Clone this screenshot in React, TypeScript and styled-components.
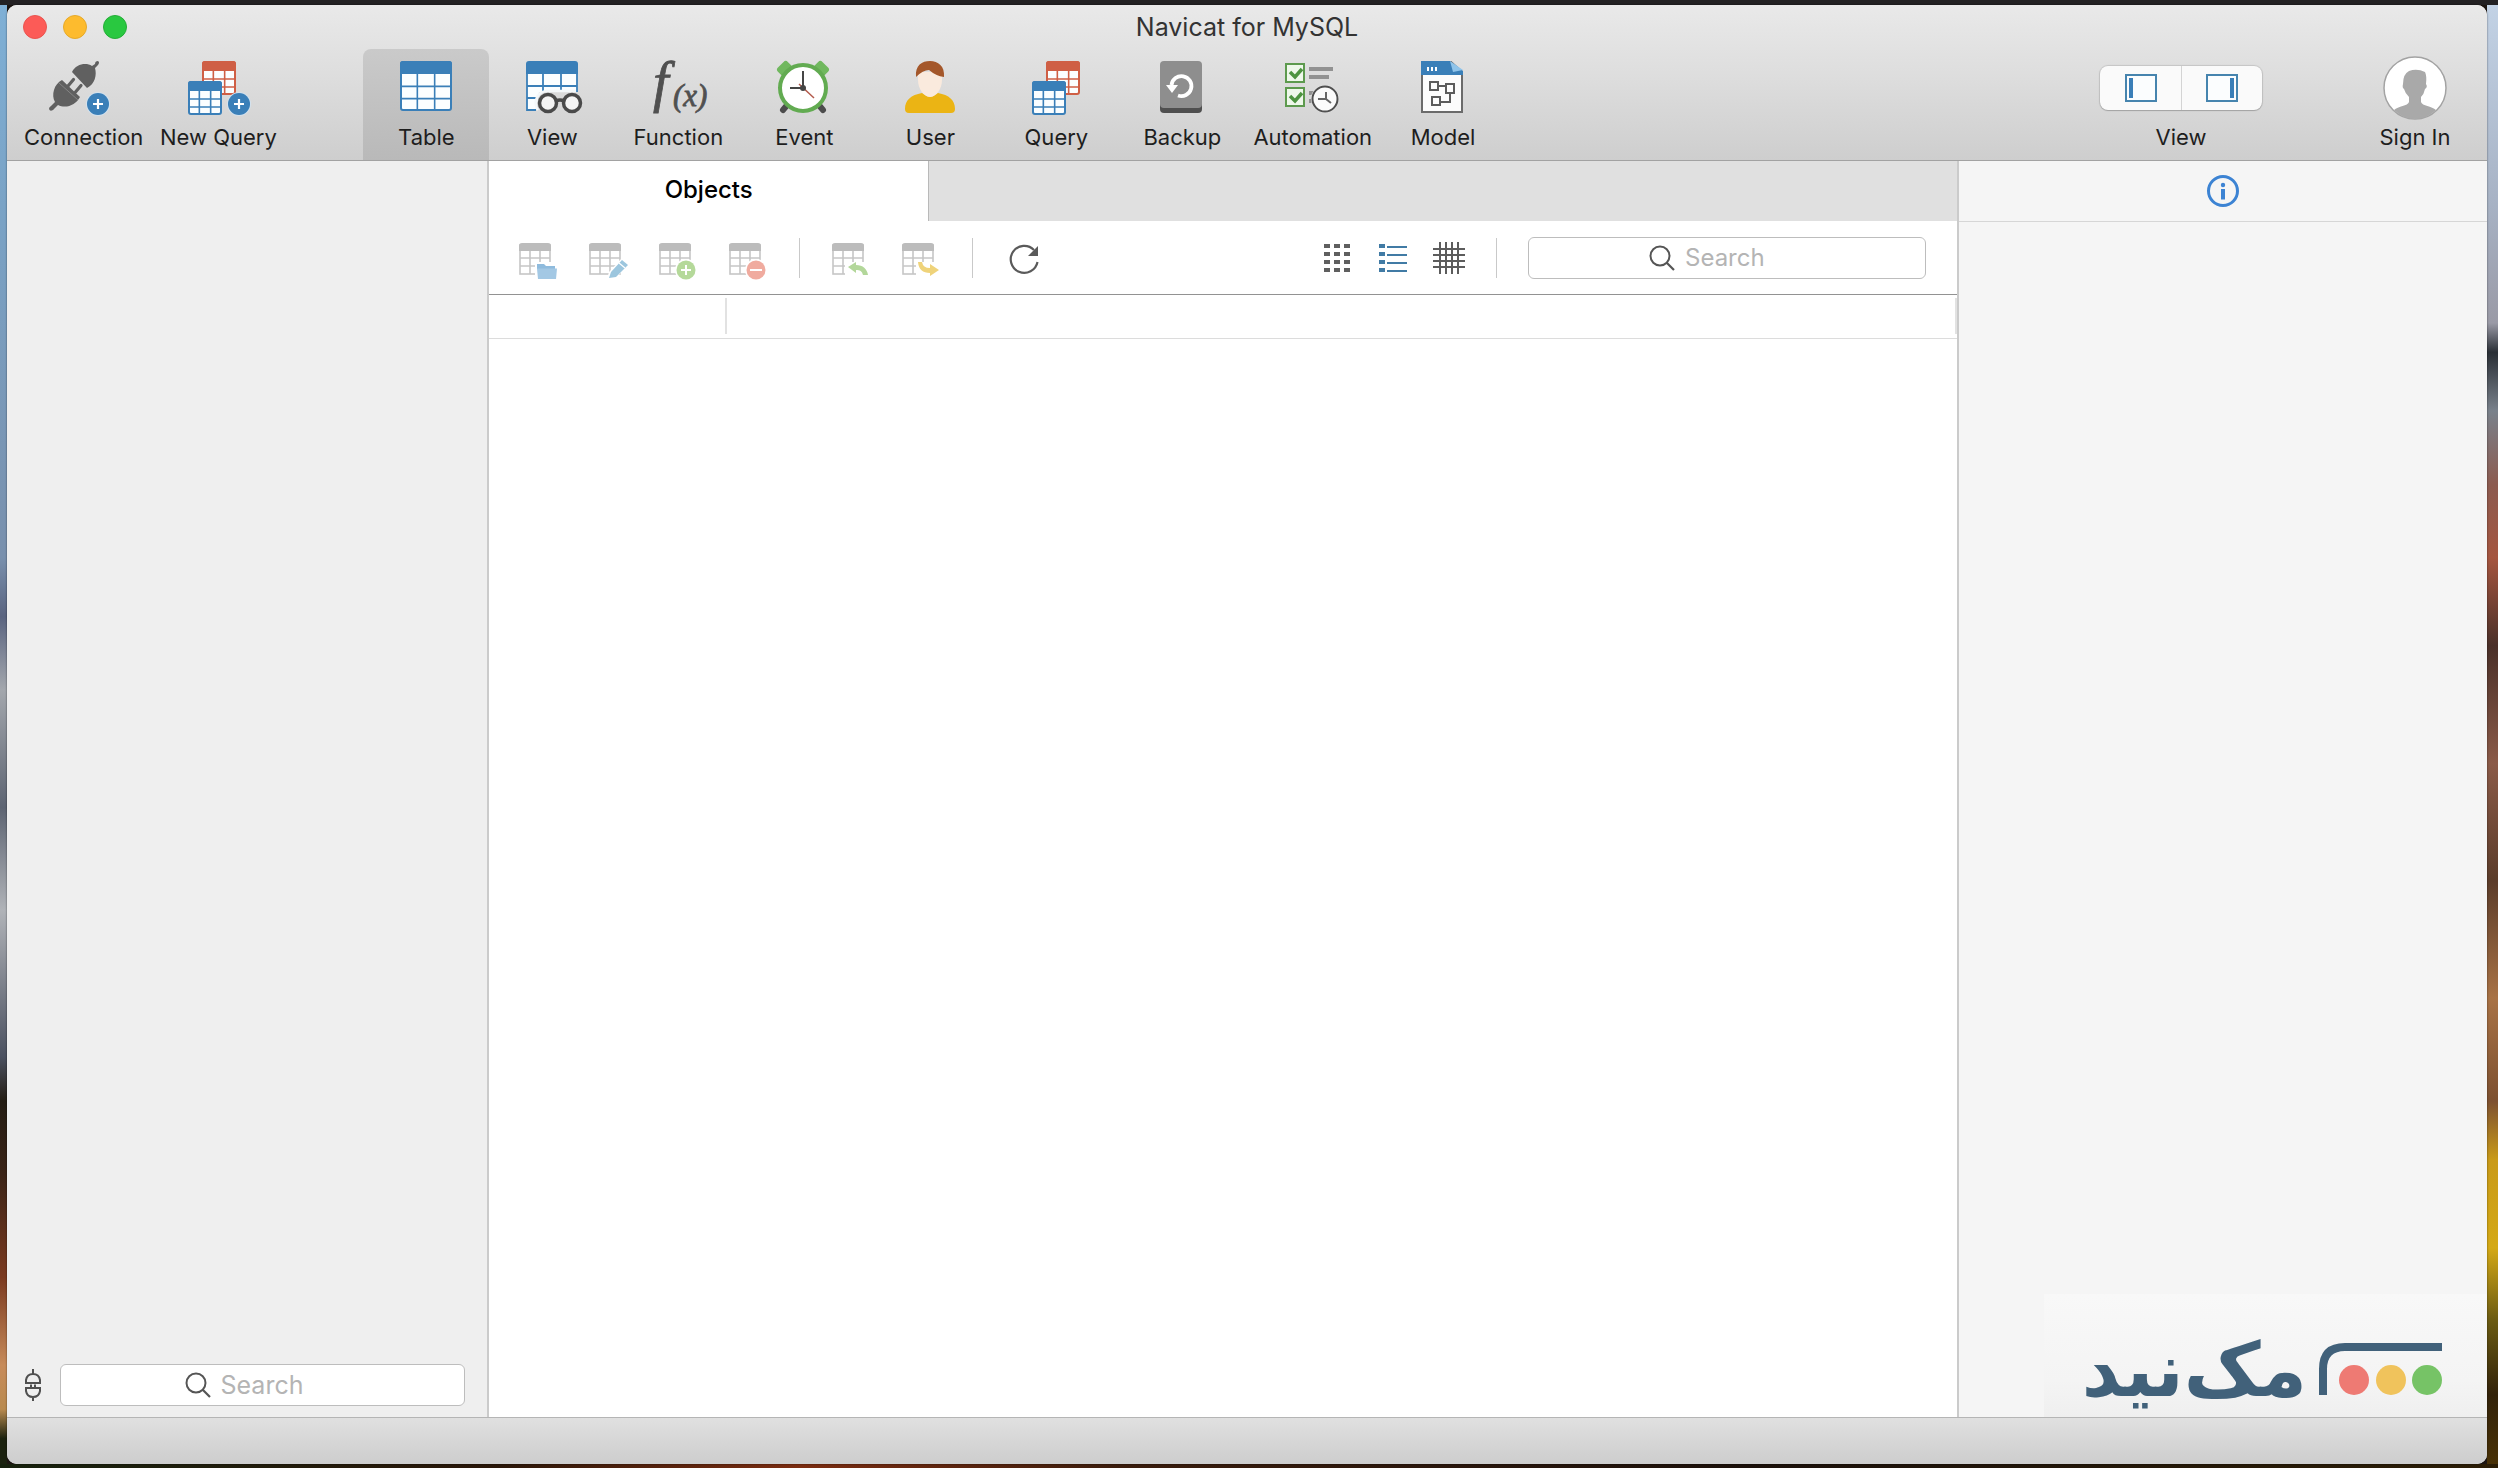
import React from "react";
import styled, { createGlobalStyle, css } from "styled-components";

const BLUE = "#3a7fb8";
const RED = "#cf5f45";
const INK = "#1e1e1e";
const GREY = "#555555";

const GlobalStyle = createGlobalStyle`
  *, *::before, *::after { box-sizing: border-box; }
  body {
    margin: 0;
    font-family: Inter, Roboto, "Liberation Sans", sans-serif;
    color: ${INK};
  }
  button, input { font: inherit; color: inherit; }
  svg { display: block; overflow: visible; }
`;

const Desktop = styled.div`
  display: flex;
  height: 100vh;
  padding: 5px 11px 4px 7px;
  background:
    linear-gradient(#232123, #232123) top / 100% 5px no-repeat,
    linear-gradient(90deg, #16210d, #2a1608 20%, #7c2c10 32%, #3a1c0c 45%, #1b100a 70%, #2b1d05) bottom / 100% 4px no-repeat,
    linear-gradient(#7fb0d6, #7aa3c6 14%, #7990ad 38%, #5a6480 42%, #a3a7ad 47%, #5d6472 55%, #b0b3b8 62%, #4b5160 72%, #241d14 75%, #3b2417 80%, #7b3a20 87%, #c78b5a 93%, #b98a4e 96%, #1b220f 98%) left / 7px 100% no-repeat,
    linear-gradient(#c3d3e6, #a7b2c4 14%, #9a9aa6 22%, #2a2f36 24%, #79818b 28%, #8c5b50 33%, #a5553f 38%, #4a3029 44%, #8a5a48 52%, #5b3c2a 60%, #a87245 68%, #7d5030 75%, #c99a18 79%, #d4a915 85%, #6a5a12 90%, #32220a 95%, #4a3206) right / 11px 100% no-repeat,
    #1d1612;
`;

const Window = styled.div`
  display: flex;
  flex: 1;
  flex-direction: column;
  min-width: 0;
  overflow: hidden;
  border-radius: 10px;
  background: #f5f5f5;
  box-shadow: 0 0 2px rgba(0, 0, 0, 0.6);
`;

const Header = styled.header`
  border-bottom: 1px solid #a2a2a2;
  background: linear-gradient(#e9e9e9, #dfdfdf 40%, #cecece);
`;

const TitleBar = styled.div`
  display: grid;
  grid-template-columns: 1fr auto 1fr;
  align-items: center;
  height: 44px;
  padding: 0 16px;
`;

const Lights = styled.div`
  display: flex;
  gap: 16px;
`;

const Light = styled.button<{ $color: string; $edge: string }>`
  width: 24px;
  height: 24px;
  padding: 0;
  border: 1px solid ${(p) => p.$edge};
  border-radius: 50%;
  background: ${(p) => p.$color};
`;

const Title = styled.h1`
  margin: 0;
  font-size: 25px;
  font-weight: 400;
  line-height: 30px;
  color: #333333;
`;

const Toolbar = styled.div`
  display: flex;
  height: 111px;
  padding: 0 9px;
`;

const ToolGroup = styled.div`
  display: flex;
  margin-right: 78px;
`;

const TrailingTools = styled.div`
  display: flex;
  gap: 90px;
  margin-left: auto;
`;

const toolColumn = css`
  display: flex;
  flex-direction: column;
  align-items: center;
  gap: 6px;
  padding: 9px 8px 10px;
  font-size: 22px;
  line-height: 26px;
  white-space: nowrap;
`;

const Tool = styled.button<{ $active?: boolean; $min?: number }>`
  ${toolColumn}
  min-width: ${(p) => p.$min ?? 126}px;
  border: 0;
  border-radius: 8px 8px 0 0;
  background: ${(p) => (p.$active ? "linear-gradient(#cacaca, #b9b9b9)" : "none")};
`;

const ToolField = styled.div`
  ${toolColumn}
  padding-left: 0;
  padding-right: 0;
`;

const IconSlot = styled.span`
  display: flex;
  align-items: center;
  justify-content: center;
  height: 60px;
`;

const Segments = styled.div`
  display: flex;
  height: 44px;
  border-radius: 8px;
  background: #fafafa;
  box-shadow: 0 0 1px 1px rgba(0, 0, 0, 0.12), 0 1px 1px rgba(0, 0, 0, 0.15);
`;

const Segment = styled.button`
  display: flex;
  align-items: center;
  justify-content: center;
  width: 81px;
  padding: 0;
  border: 0;
  background: none;
  & + & {
    border-left: 1px solid #d4d4d4;
  }
`;

const Body = styled.div`
  display: flex;
  flex: 1;
  min-height: 0;
`;

const Sidebar = styled.aside`
  display: flex;
  flex: 0 0 482px;
  flex-direction: column;
  justify-content: flex-end;
  border-right: 2px solid #cbcbcb;
  background: #efefef;
`;

const SidebarFooter = styled.div`
  display: flex;
  align-items: center;
  gap: 20px;
  padding: 0 22px 11px 19px;
`;

const PlainButton = styled.button`
  display: flex;
  padding: 0;
  border: 0;
  background: none;
`;

const SearchField = styled.label<{ $width?: number }>`
  display: flex;
  ${(p) => (p.$width ? `width: ${p.$width}px;` : "flex: 1;")}
  align-items: center;
  justify-content: center;
  gap: 10px;
  height: 42px;
  border: 1px solid #bdbdbd;
  border-radius: 6px;
  background: #ffffff;
`;

const SearchInput = styled.input<{ $size: number }>`
  width: 120px;
  padding: 0;
  border: 0;
  outline: 0;
  background: none;
  font-size: ${(p) => p.$size}px;
  line-height: 30px;
  &::placeholder {
    color: #b4b4b4;
    opacity: 1;
  }
`;

const Main = styled.main`
  display: flex;
  flex: 1;
  flex-direction: column;
  min-width: 0;
  background: #ffffff;
`;

const TabBar = styled.div`
  display: flex;
  height: 60px;
  background: #e0e0e0;
`;

const Tab = styled.button`
  width: 30%;
  padding: 0 0 2px;
  border: 0;
  border-right: 1px solid #b9b9b9;
  background: #ffffff;
  font-size: 24px;
  font-weight: 500;
  line-height: 30px;
  color: #000000;
`;

const ObjectBar = styled.div`
  display: flex;
  align-items: center;
  justify-content: space-between;
  height: 74px;
  padding: 0 31px 0 29px;
  border-bottom: 1px solid #929292;
`;

const ObjectGroup = styled.div`
  display: flex;
  align-items: center;
  gap: 30px;
`;

const Divider = styled.span`
  width: 1px;
  height: 40px;
  margin: 0 1px;
  background: #c9c9c9;
`;

const ViewSwitch = styled.div`
  display: flex;
  gap: 24px;
`;

const ListTable = styled.table`
  width: 100%;
  border-collapse: collapse;
  border-bottom: 1px solid #dcdcdc;
`;

const ColumnHead = styled.th<{ $width?: string }>`
  width: ${(p) => p.$width ?? "auto"};
  height: 43px;
  padding: 3px 0 4px;
`;

const ColumnEdge = styled.span`
  display: block;
  height: 36px;
  border-right: 2px solid #e2e2e2;
`;

const InfoPane = styled.aside`
  display: flex;
  flex: 0 0 530px;
  flex-direction: column;
  border-left: 2px solid #cbcbcb;
  background: #f5f5f5;
`;

const InfoTabs = styled.div`
  display: flex;
  justify-content: center;
  align-items: center;
  height: 61px;
  border-bottom: 1px solid #d6d6d6;
`;

const Watermark = styled.div`
  display: flex;
  align-items: flex-start;
  align-self: flex-end;
  gap: 12px;
  height: 123px;
  margin-top: auto;
  padding: 49px 45px 0 38px;
  background: linear-gradient(#f8f8f8, #f4f4f4 70%, #efefef);
  color: #41617a;
`;

const Wordmark = styled.span`
  font-family: "DejaVu Sans", sans-serif;
  font-size: 75px;
  font-weight: 700;
  line-height: 54px;
  white-space: nowrap;
`;

const StatusBar = styled.footer`
  height: 47px;
  border-top: 1px solid #b5b5b5;
  background: linear-gradient(#e0e0e0, #cdcdcd);
`;

/* ---------- drawings ---------- */

function Art({ w = 72, h = 60, children }: { w?: number; h?: number; children: React.ReactNode }) {
  return (
    <svg width={w} height={h} viewBox={`0 0 ${w} ${h}`} fill="none" aria-hidden="true">
      {children}
    </svg>
  );
}

type SheetProps = { x: number; y: number; w: number; h: number; head: number; color: string };

function Sheet({ x, y, w, h, head, color }: SheetProps) {
  const row = (h - head) / 3;
  return (
    <g>
      <rect x={x + 1} y={y + 1} width={w - 2} height={h - 2} rx="2" fill="#fbfeff" stroke={color} strokeWidth="2" />
      <path d={`M${x} ${y + head}V${y + 3}q0 -3 3 -3H${x + w - 3}q3 0 3 3V${y + head}Z`} fill={color} />
      <path
        d={`M${x + w / 3} ${y + head}V${y + h}M${x + (2 * w) / 3} ${y + head}V${y + h}M${x} ${y + head + row}H${x + w}M${x} ${y + head + 2 * row}H${x + w}`}
        stroke={color}
        strokeWidth="1.6"
      />
    </g>
  );
}

function PlusBadge({ x, y }: { x: number; y: number }) {
  return (
    <g>
      <circle cx={x} cy={y} r="12" fill="#d3e2ee" />
      <circle cx={x} cy={y} r="11" fill={BLUE} />
      <path d={`M${x - 5} ${y}h10M${x} ${y - 5}v10`} stroke="#fff" strokeWidth="2.2" />
    </g>
  );
}

const ConnectionIcon = () => (
  <Art>
    <path d="M24 14C28 6 38 4 44 8L47 6Q47 3 50 3Q52 4 50 7L47 10C49 17 47 26 39 30Z" fill="#606060" />
    <path d="M20 28l5.500-6.500M27.500 34l5.500-6.500" stroke="#606060" strokeWidth="3.200" strokeLinecap="round" />
    <path d="M14 22L32 39C28 47 18 51 10 47L5 52Q2 54 1 51Q1 49 3 48L7 44C3 37 6 26 14 22Z" fill="#606060" />
    <path d="M11 25L30 42" stroke="#848484" strokeWidth="1" />
    <PlusBadge x={50} y={46} />
  </Art>
);

const NewQueryIcon = () => (
  <Art>
    <Sheet x={20} y={3} w={34} h={34} head={10} color={RED} />
    <Sheet x={6} y={23} w={34} h={34} head={10} color={BLUE} />
    <PlusBadge x={57} y={46} />
  </Art>
);

const TableIcon = () => (
  <Art>
    <Sheet x={10} y={3} w={52} h={50} head={13} color={BLUE} />
  </Art>
);

const ViewIcon = () => (
  <Art>
    <path d="M11 15V52H20L23 34H61V15Z" fill="#fbfeff" />
    <path d="M10 16V6q0-3 3-3H59q3 0 3 3V16Z" fill={BLUE} />
    <path d="M11 16V52H20M61 16V34M27 16V34M45 16V34M11 28H61M11 40H20" stroke={BLUE} strokeWidth="1.800" />
    <path d="M22 52A12 12 0 0 1 30 33H60" stroke="#f4f8fa" strokeWidth="2.500" />
    <circle cx="32" cy="45" r="8.500" fill="#f4f4f4" stroke="#4a4a4a" strokeWidth="3.500" />
    <circle cx="56" cy="45" r="8.500" fill="#f4f4f4" stroke="#4a4a4a" strokeWidth="3.500" />
    <path d="M40 43q4-2 8 0" stroke="#4a4a4a" strokeWidth="3.500" />
  </Art>
);

const FunctionIcon = () => (
  <Art>
    <g fill="#505050" stroke="#505050" strokeWidth="0.800" fontFamily="'Liberation Serif', serif" fontStyle="italic">
      <text x="16" y="43" fontSize="56" textAnchor="start" dx="-5">f</text>
      <text x="31" y="48" fontSize="31">(x)</text>
    </g>
  </Art>
);

const EventIcon = () => (
  <Art>
    <path d="M20 46L15 52M50 46L55 52" stroke="#4c4c4c" strokeWidth="6" strokeLinecap="round" />
    <rect x="10" y="5" width="14" height="11" rx="3" transform="rotate(-45 17 11)" fill="#70b85e" />
    <rect x="46" y="5" width="14" height="11" rx="3" transform="rotate(45 53 11)" fill="#70b85e" />
    <circle cx="35" cy="30" r="23" fill="#fff" stroke="#62ab51" strokeWidth="4" />
    <path d="M35 30V13M35 30H22" stroke="#454545" strokeWidth="2" />
    <path d="M31 26L46 40" stroke="#b35a4c" strokeWidth="1.500" />
    <circle cx="35" cy="30" r="3" fill="#454545" />
  </Art>
);

const UserIcon = () => (
  <Art>
    <path d="M11 51C11 42 17 37 28 35Q36 42 44 35C55 37 61 42 61 51Q61 55 57 55H15Q11 55 11 51Z" fill="#ebb414" />
    <path d="M24 14H48V22C48 31 42 39 36 39S24 31 24 22Z" fill="#faeadd" />
    <path d="M22 19C21 7 28 3 36 3S51 8 50 19Q42 18 35 12Q29 12 22 19Z" fill="#a4572a" />
  </Art>
);

const QueryIcon = () => (
  <Art>
    <Sheet x={26} y={3} w={34} h={34} head={10} color={RED} />
    <Sheet x={12} y={23} w={34} h={34} head={10} color={BLUE} />
  </Art>
);

const BackupIcon = () => (
  <Art>
    <rect x="14" y="15" width="42" height="40" rx="4" fill="#4f4f4f" />
    <rect x="14" y="3" width="42" height="47" rx="4" fill="#8e8e8e" />
    <path d="M25.500 27A10 10 0 1 1 32 37.500" stroke="#fff" strokeWidth="3.800" />
    <path d="M20 27H32L26 35Z" fill="#fff" />
  </Art>
);

const AutomationIcon = () => (
  <Art>
    {[6, 30].map((y) => (
      <g key={y}>
        <rect x="9" y={y} width="18" height="18" fill="#eef8ea" stroke="#5d9a4e" strokeWidth="2" />
        <path d={`M13 ${y + 8}l5 5l7-8`} stroke="#4d9440" strokeWidth="3.500" />
      </g>
    ))}
    <path d="M32 11H56M32 19H52M32 35H38M32 43H36" stroke="#929292" strokeWidth="4" />
    <circle cx="48" cy="41" r="14" fill="#e4e4e4" />
    <circle cx="48" cy="41" r="12.500" fill="#fbfbfb" stroke="#505050" strokeWidth="2" />
    <path d="M49 34V41L54 45M49 41H41" stroke="#666" strokeWidth="2" />
  </Art>
);

const ModelIcon = () => (
  <Art>
    <path d="M15 4H44L55 14V54H15Z" fill="#fcfcfc" stroke="#6b6b6b" strokeWidth="2" />
    <path d="M14 3H43L56 13V17H14Z" fill={BLUE} />
    <path d="M43 3L56 12L46 14Z" fill="#8fc4ea" />
    <path d="M21 9V13M25 9V13M29 9V13" stroke="#fff" strokeWidth="2" />
    <path d="M23 24h8v8h-8zM39 26h8v9h-8zM25 39h8v8h-8zM31 28H39M33 44H43V35" stroke="#5c5c5c" strokeWidth="2" />
  </Art>
);

const PaneIcon = ({ side }: { side: "left" | "right" }) => (
  <Art w={32} h={28}>
    <rect x="1" y="1" width="30" height="26" fill="#fbfdfe" stroke="#4684ae" strokeWidth="2" />
    <rect x={side === "left" ? 4 : 24} y="4" width="4" height="20" fill={BLUE} />
  </Art>
);

const AvatarIcon = () => (
  <Art w={64} h={64}>
    <circle cx="32" cy="32" r="31" fill="#fff" stroke="#a3a3a3" strokeWidth="1.500" />
    <path
      d="M11 54C15 50 25 50 26 46V41Q22 37 21 33Q19 32 20 28Q20 18 26 15Q34 12 42 16Q44 20 43 28Q45 31 42 33Q41 38 38 41V46C39 50 49 50 53 54Q44 63 32 63T11 54Z"
      fill="#a9a9a9"
    />
  </Art>
);

const InfoIcon = () => (
  <Art w={32} h={32}>
    <circle cx="16" cy="16" r="14.500" stroke="#3c83d3" strokeWidth="3" />
    <circle cx="16" cy="10" r="2.200" fill="#3c83d3" />
    <path d="M16 14V24.500" stroke="#3c83d3" strokeWidth="4" />
  </Art>
);

const SearchIcon = () => (
  <Art w={26} h={26}>
    <circle cx="11" cy="11" r="9.500" stroke={GREY} strokeWidth="2" />
    <path d="M17.500 17.500L25 25" stroke={GREY} strokeWidth="2.200" />
  </Art>
);

const PlugIcon = () => (
  <Art w={14} h={32}>
    <path d="M7 0V5M0 14V11Q1 5 7 5T14 11V14ZM0 19V22Q1 28 7 28T14 22V19ZM7 28V32M5 15.500V18M9 15.500V18" stroke="#505050" strokeWidth="2" />
  </Art>
);

function ObjectIcon({ children }: { children: React.ReactNode }) {
  return (
    <Art w={40} h={40}>
      <rect x="2" y="7" width="30" height="29" fill="#fff" stroke="#c6c6c6" strokeWidth="1.600" />
      <path d="M1 13V8Q1 5 4 5H30Q33 5 33 8V13Z" fill="#bcbcbc" />
      <path d="M12 13V36M22 13V36M2 20H32M2 28H32" stroke="#c6c6c6" strokeWidth="1.600" />
      {children}
    </Art>
  );
}

const objectTools = [
  {
    label: "Open Table",
    art: (
      <>
        <path d="M17 24H40V42H17Z" fill="#fff" />
        <path d="M19 26H26L28 28H37V31H19Z" fill="#8fbbdd" />
        <path d="M19 30.500H39L38 41H20Z" fill="#a3c8e4" />
      </>
    ),
  },
  {
    label: "Design Table",
    art: (
      <>
        <path d="M19 41L21 34L34 20L41 26L29 39Z" fill="#fff" />
        <path d="M21 40L23 34L34 22L40 27L28 39Z" fill="#9cc6de" />
        <path d="M31 25L37 30" stroke="#fff" strokeWidth="1.200" />
      </>
    ),
  },
  {
    label: "New Table",
    art: (
      <>
        <circle cx="28" cy="32" r="11" fill="#fff" />
        <circle cx="28" cy="32" r="9.500" fill="#b5d99a" />
        <path d="M23 32H33M28 27V37" stroke="#fff" strokeWidth="2" />
      </>
    ),
  },
  {
    label: "Delete Table",
    art: (
      <>
        <circle cx="28" cy="32" r="11" fill="#fff" />
        <circle cx="28" cy="32" r="9.500" fill="#f0ab9f" />
        <path d="M22 32H34" stroke="#fff" strokeWidth="2" />
      </>
    ),
  },
];

const transferTools = [
  {
    label: "Import Wizard",
    art: (
      <>
        <path d="M14 24H40V42H14Z" fill="#fff" />
        <path d="M17 29L25 24V27C32 27 36 31 37 37H32C31 33 29 32 25 32V35Z" fill="#b3d79a" />
      </>
    ),
  },
  {
    label: "Export Wizard",
    art: (
      <>
        <path d="M15 24H40V42H15Z" fill="#fff" />
        <path d="M17 24H21Q22 30 29 30V26L38 32L29 38V35Q18 35 17 24Z" fill="#efd37a" />
      </>
    ),
  },
];

const RefreshIcon = () => (
  <Art w={40} h={40}>
    <path d="M30 12A13.500 13.500 0 1 0 33.500 24" stroke="#5a5a5a" strokeWidth="2.200" />
    <path d="M34 8V18H24Z" fill="#5a5a5a" />
  </Art>
);

const GridIcon = () => (
  <Art w={32} h={32}>
    {[2, 10, 18, 26].map((y) =>
      [3, 13, 23].map((x) => <rect key={`${x}-${y}`} x={x} y={y} width="6" height="4" fill="#5f5f5f" />)
    )}
  </Art>
);

const DetailIcon = () => (
  <Art w={32} h={32}>
    {[2, 10, 18, 26].map((y) => (
      <g key={y} fill="#417ba5">
        <rect x="2" y={y} width="6" height="4" />
        <rect x="10" y={y + 2} width="20" height="2" />
      </g>
    ))}
  </Art>
);

const HatchIcon = () => (
  <Art w={32} h={32}>
    <path d="M7 0V32M13 0V32M19 0V32M25 0V32M0 7H32M0 13H32M0 19H32M0 25H32" stroke="#5c5c5c" strokeWidth="2" />
  </Art>
);

const BrandMark = () => (
  <Art w={123} h={52}>
    <path d="M4 52V26Q4 4 26 4H123" stroke="#41617a" strokeWidth="8" />
    <circle cx="35" cy="37" r="15" fill="#ee7a73" />
    <circle cx="72" cy="37" r="15" fill="#f0c35c" />
    <circle cx="108" cy="37" r="15" fill="#76c366" />
  </Art>
);

/* ---------- page ---------- */

const lights = [
  { label: "Close", color: "#fc5b57", edge: "#e9544f" },
  { label: "Minimize", color: "#fdbb2e", edge: "#e5a92a" },
  { label: "Zoom", color: "#29c840", edge: "#24ad37" },
];

const createTools = [
  { label: "Connection", icon: <ConnectionIcon /> },
  { label: "New Query", icon: <NewQueryIcon /> },
];

const objectTypes = [
  { label: "Table", icon: <TableIcon />, active: true },
  { label: "View", icon: <ViewIcon /> },
  { label: "Function", icon: <FunctionIcon /> },
  { label: "Event", icon: <EventIcon /> },
  { label: "User", icon: <UserIcon /> },
  { label: "Query", icon: <QueryIcon /> },
  { label: "Backup", icon: <BackupIcon /> },
  { label: "Automation", icon: <AutomationIcon /> },
  { label: "Model", icon: <ModelIcon /> },
];

function Search({ label, size, width }: { label: string; size: number; width?: number }) {
  return (
    <SearchField $width={width}>
      <SearchIcon />
      <SearchInput type="text" placeholder="Search" aria-label={label} $size={size} />
    </SearchField>
  );
}

export default function App() {
  return (
    <Desktop>
      <GlobalStyle />
      <Window>
        <Header>
          <TitleBar>
            <Lights>
              {lights.map((l) => (
                <Light key={l.label} aria-label={l.label} $color={l.color} $edge={l.edge} />
              ))}
            </Lights>
            <Title>Navicat for MySQL</Title>
          </TitleBar>
          <Toolbar>
            <ToolGroup>
              {createTools.map((t) => (
                <Tool key={t.label} $min={134}>
                  <IconSlot>{t.icon}</IconSlot>
                  {t.label}
                </Tool>
              ))}
            </ToolGroup>
            <ToolGroup>
              {objectTypes.map((t) => (
                <Tool key={t.label} $active={t.active} aria-pressed={!!t.active}>
                  <IconSlot>{t.icon}</IconSlot>
                  {t.label}
                </Tool>
              ))}
            </ToolGroup>
            <TrailingTools>
              <ToolField role="group" aria-labelledby="panes-label">
                <IconSlot>
                  <Segments>
                    <Segment aria-label="Toggle left pane">
                      <PaneIcon side="left" />
                    </Segment>
                    <Segment aria-label="Toggle right pane">
                      <PaneIcon side="right" />
                    </Segment>
                  </Segments>
                </IconSlot>
                <span id="panes-label">View</span>
              </ToolField>
              <Tool>
                <IconSlot>
                  <AvatarIcon />
                </IconSlot>
                Sign In
              </Tool>
            </TrailingTools>
          </Toolbar>
        </Header>
        <Body>
          <Sidebar>
            <SidebarFooter>
              <PlainButton aria-label="Show connected only">
                <PlugIcon />
              </PlainButton>
              <Search label="Search connections" size={25} />
            </SidebarFooter>
          </Sidebar>
          <Main>
            <TabBar role="tablist">
              <Tab role="tab" aria-selected="true">
                Objects
              </Tab>
            </TabBar>
            <ObjectBar>
              <ObjectGroup>
                {objectTools.map((t) => (
                  <PlainButton key={t.label} aria-label={t.label} disabled>
                    <ObjectIcon>{t.art}</ObjectIcon>
                  </PlainButton>
                ))}
                <Divider />
                {transferTools.map((t) => (
                  <PlainButton key={t.label} aria-label={t.label} disabled>
                    <ObjectIcon>{t.art}</ObjectIcon>
                  </PlainButton>
                ))}
                <Divider />
                <PlainButton aria-label="Refresh">
                  <RefreshIcon />
                </PlainButton>
              </ObjectGroup>
              <ObjectGroup>
                <ViewSwitch>
                  <PlainButton aria-label="Icon view">
                    <GridIcon />
                  </PlainButton>
                  <PlainButton aria-label="Detail view">
                    <DetailIcon />
                  </PlainButton>
                  <PlainButton aria-label="Diagram view">
                    <HatchIcon />
                  </PlainButton>
                </ViewSwitch>
                <Divider />
                <Search label="Search objects" size={24} width={398} />
              </ObjectGroup>
            </ObjectBar>
            <ListTable aria-label="Objects">
              <thead>
                <tr>
                  <ColumnHead $width="238px" aria-label="Name">
                    <ColumnEdge />
                  </ColumnHead>
                  <ColumnHead aria-label="Details">
                    <ColumnEdge />
                  </ColumnHead>
                </tr>
              </thead>
            </ListTable>
          </Main>
          <InfoPane>
            <InfoTabs>
              <PlainButton aria-label="Information">
                <InfoIcon />
              </PlainButton>
            </InfoTabs>
            <Watermark>
              <Wordmark lang="fa" dir="rtl">
                مک‌نید
              </Wordmark>
              <BrandMark />
            </Watermark>
          </InfoPane>
        </Body>
        <StatusBar />
      </Window>
    </Desktop>
  );
}
